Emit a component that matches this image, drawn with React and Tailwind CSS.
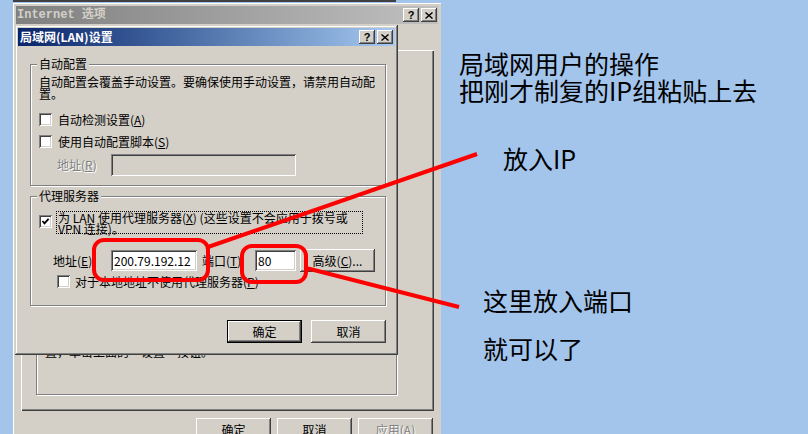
import React from 'react';

// Win2000 style bevels
const RAISED = 'shadow-[inset_-1px_-1px_0_#404040,inset_1px_1px_0_#ffffff,inset_-2px_-2px_0_#808080]';
const WINDOW = 'shadow-[inset_-1px_-1px_0_#404040,inset_1px_1px_0_#d4d0c8,inset_-2px_-2px_0_#808080,inset_2px_2px_0_#ffffff]';
const SUNKEN = 'shadow-[inset_1px_1px_0_#808080,inset_-1px_-1px_0_#ffffff,inset_2px_2px_0_#404040,inset_-2px_-2px_0_#d4d0c8]';

const CapButton = ({ children }) => (
	<div className={`w-[16px] h-[14px] bg-[#d4d0c8] flex items-center justify-center ${RAISED}`}>{children}</div>
);

const TitleBar = ({ title, active }) => (
	<div
		className={
			active
				? 'h-[18px] flex items-center pl-[2px] pr-[2px] bg-linear-to-r from-[#0a246a] to-[#a6caf0] text-white'
				: 'h-[18px] flex items-center pl-[1px] pr-[1px] bg-linear-to-r from-[#808080] to-[#c0c0c0] text-[#d4d0c8]'
		}
	>
		<span
			className={
				active
					? "flex-1 font-bold text-[12px] leading-none font-['Noto_Sans_CJK_SC',sans-serif]"
					: "flex-1 font-bold text-[12px] leading-none font-['Liberation_Mono','Noto_Sans_CJK_SC',monospace]"
			}
		>
			{title}
		</span>
		<div className="flex gap-[2px]">
			<CapButton>
				<span className="text-[11px] font-bold leading-none text-black font-['Liberation_Sans',sans-serif]">?</span>
			</CapButton>
			<CapButton>
				<svg width="8" height="7" viewBox="0 0 8 7">
					<path d="M0.5 0.5 L7.5 6.5 M7.5 0.5 L0.5 6.5" stroke="#000" strokeWidth="1.4" />
				</svg>
			</CapButton>
		</div>
	</div>
);

const Button = ({ label, isDefault, disabled }) => (
	<div
		className={
			isDefault
				? 'w-[75px] h-[23px] border border-black bg-[#d4d0c8] flex items-center justify-center shadow-[inset_-1px_-1px_0_#404040,inset_1px_1px_0_#ffffff,inset_-2px_-2px_0_#808080]'
				: `w-[75px] h-[23px] bg-[#d4d0c8] flex items-center justify-center ${RAISED}`
		}
	>
		<span className={disabled ? 'text-[#808080] [text-shadow:1px_1px_0_#fff]' : 'text-black'}>{label}</span>
	</div>
);

const Check = ({ checked }) => (
	<div className={`w-[13px] h-[13px] shrink-0 bg-white flex items-center justify-center ${SUNKEN}`}>
		{checked && (
			<svg width="9" height="9" viewBox="0 0 9 9">
				<path d="M1.5 4 L3.5 6.3 L7.6 1.8" stroke="#000" strokeWidth="1.8" fill="none" />
			</svg>
		)}
	</div>
);

const Group = ({ label, className, children }) => (
	<div className={`relative border border-[#808080] shadow-[1px_1px_0_#ffffff,inset_1px_1px_0_#ffffff] ${className}`}>
		{label && <span className="absolute -top-[7px] left-[6px] px-[2px] bg-[#d4d0c8] leading-[12px]">{label}</span>}
		{children}
	</div>
);

const TextBox = ({ value, className, disabled }) => (
	<div className={`${disabled ? 'bg-[#d4d0c8]' : 'bg-white'} flex items-center pl-[3px] ${SUNKEN} ${className}`}>
		<span className="leading-none">{value}</span>
	</div>
);

const App = () => {
	return (
		<div className="relative w-[808px] h-[434px] overflow-hidden bg-[#a3c5ec] text-[12px] text-black font-['Noto_Sans_CJK_SC',sans-serif]">
			{/* window behind */}
			<div className="absolute left-[13px] top-0 w-[383px] h-[2px] bg-[#404040]" />

			{/* Internet 选项 */}
			<div className="absolute left-[13px] top-[3px] w-[428px] h-[440px] bg-[#d4d0c8] p-[3px] shadow-[inset_1px_1px_0_#ffffff]">
				<TitleBar title="Internet 选项" />
				<div className="ml-[5px] mt-[26px] w-[413px] h-[361px] flex flex-col justify-end pl-[15px] pb-[16px] shadow-[inset_1px_1px_0_#ffffff,inset_-1px_-1px_0_#404040,inset_-2px_-2px_0_#808080]">
					<Group className="w-[361px] h-[110px] flex flex-col justify-end pl-[8px] pb-[36px]">
						<p className="leading-[12px]">LAN 设置不应用到拨号连接。对于拨号设</p>
						<p className="leading-[12px]">置，单击上面的“设置”按钮。</p>
					</Group>
				</div>
				<div className="mt-[7px] flex justify-end gap-[6px] pr-[5px]">
					<Button label="确定" />
					<Button label="取消" />
					<Button
						disabled
						label={
							<>
								应用(<u>A</u>)
							</>
						}
					/>
				</div>
			</div>

			{/* 局域网(LAN)设置 */}
			<div className={`absolute left-[15px] top-[25px] w-[383px] h-[330px] bg-[#d4d0c8] p-[3px] ${WINDOW}`}>
				<TitleBar active title="局域网(LAN)设置" />
				<div className="ml-[12px] mt-[18px] w-[356px]">
					<Group label="自动配置" className="h-[122px] pl-[8px] pt-[11px]">
						<p className="leading-[12px]">
							自动配置会覆盖手动设置。要确保使用手动设置，请禁用自动配
							<br />
							置。
						</p>
						<div className="mt-[13px] h-[13px] flex items-center">
							<Check />
							<span className="ml-[6px] leading-none">
								自动检测设置(<u>A</u>)
							</span>
						</div>
						<div className="mt-[9px] h-[13px] flex items-center">
							<Check />
							<span className="ml-[6px] leading-none">
								使用自动配置脚本(<u>S</u>)
							</span>
						</div>
						<div className="mt-[6px] flex items-center">
							<span className="ml-[18px] w-[54px] text-[#808080] [text-shadow:1px_1px_0_#fff]">
								地址(<u>R</u>)
							</span>
							<TextBox disabled value="" className="w-[185px] h-[22px]" />
						</div>
					</Group>

					<Group label="代理服务器" className="mt-[10px] h-[110px] pl-[8px] pt-[14px]">
						<div className="flex items-start">
							<div className="mt-[4px]">
								<Check checked />
							</div>
							<div className="ml-[4px] w-[307px] h-[23px] border border-dotted border-black px-[1px] leading-[11px]">
								为 LAN 使用代理服务器(<u>X</u>) (这些设置不会应用于拨号或
								<br />
								VPN 连接)。
							</div>
						</div>
						<div className="mt-[15px] flex items-center">
							<span className="ml-[14px] w-[58px]">
								地址(<u>E</u>):
							</span>
							<TextBox value="200.79.192.12" className="w-[86px] h-[21px]" />
							<span className="ml-[5px] w-[53px]">
								端口(<u>T</u>):
							</span>
							<TextBox value="80" className="w-[41px] h-[21px]" />
							<div className="ml-[4px]">
								<Button
									label={
										<>
											高级(<u>C</u>)...
										</>
									}
								/>
							</div>
						</div>
						<div className="mt-[3px] ml-[18px] h-[13px] flex items-center">
							<Check />
							<span className="ml-[5px] leading-none">
								对于本地地址不使用代理服务器(<u>P</u>)
							</span>
						</div>
					</Group>

					<div className="mt-[14px] flex justify-end gap-[9px]">
						<Button isDefault label="确定" />
						<Button label="取消" />
					</div>
				</div>
			</div>

			{/* red marks */}
			<svg className="absolute inset-0 pointer-events-none" width="808" height="434" viewBox="0 0 808 434">
				<rect x="94" y="240" width="114" height="40" rx="10" fill="none" stroke="#ff0000" strokeWidth="4" />
				<rect x="242" y="246" width="64" height="36" rx="10" fill="none" stroke="#ff0000" strokeWidth="4" />
				<line x1="208" y1="247" x2="477" y2="154" stroke="#ff0000" strokeWidth="4" />
				<line x1="306" y1="268" x2="459" y2="307" stroke="#ff0000" strokeWidth="4" />
			</svg>

			{/* notes */}
			<div className="absolute left-[459px] top-[50px] text-[25px] leading-[27px]">
				<p>局域网用户的操作</p>
				<p>把刚才制复的IP组粘贴上去</p>
			</div>
			<p className="absolute left-[503px] top-[146px] text-[25px] leading-[25px]">放入IP</p>
			<p className="absolute left-[483px] top-[288px] text-[25px] leading-[25px]">这里放入端口</p>
			<p className="absolute left-[483px] top-[336px] text-[25px] leading-[25px]">就可以了</p>
		</div>
	);
};

export default App;
